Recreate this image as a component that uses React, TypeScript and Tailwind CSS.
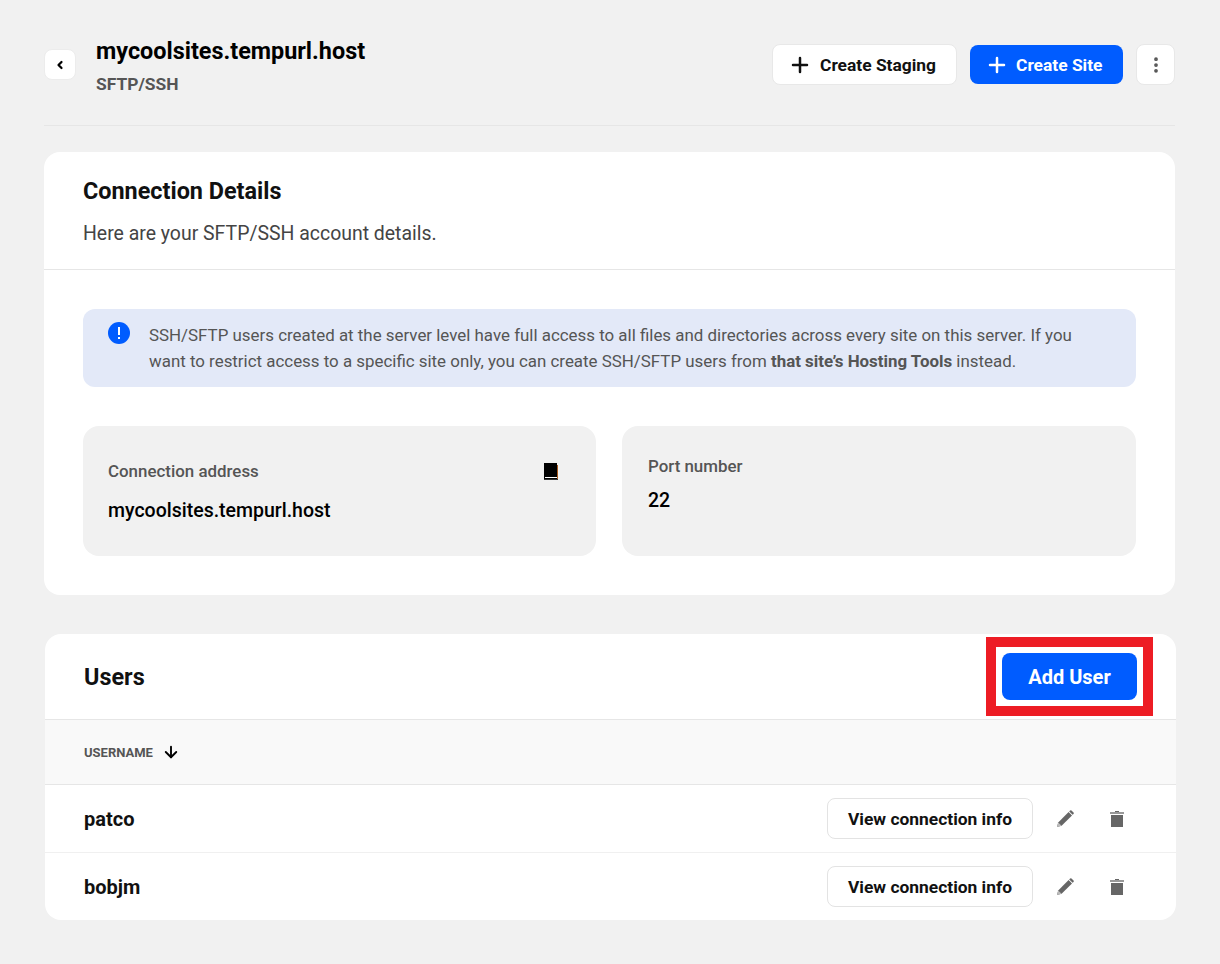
import { ArrowDown, ChevronLeft, EllipsisVertical, Plus } from "lucide-react";

const users = ["patco", "bobjm"];

function BookGlyph() {
  return (
    <svg width="15" height="17" viewBox="0 0 15 17">
      <rect x="0" y="0" width="13" height="16" fill="#000" />
      <rect x="13" y="2" width="1" height="15" fill="#a85a1e" />
      <rect x="1" y="14" width="12" height="1" fill="#fff" />
      <rect x="0" y="16" width="14" height="1" fill="#333" />
    </svg>
  );
}

function PencilIcon() {
  return (
    <svg width="18" height="18" viewBox="0 0 18 18" fill="#666">
      <path d="M1 17l1.2-4.6L12.6 2l3.4 3.4L5.6 15.8z" />
      <path d="M2.2 12.4L5.6 15.8 1 17z" fill="#bbb" />
      <path d="M13.2 1.4l.9-.9a1 1 0 0 1 1.4 0l2 2a1 1 0 0 1 0 1.4l-.9.9z" />
    </svg>
  );
}

function TrashIcon() {
  return (
    <svg width="14" height="16" viewBox="0 0 14 16">
      <rect x="5" y="0" width="4" height="2" fill="#666" />
      <rect x="0" y="1" width="14" height="2" fill="#999" />
      <rect x="1" y="4" width="12" height="12" fill="#666" />
    </svg>
  );
}

export default function App() {
  return (
    <div className="min-h-[964px] bg-[#f1f1f1] pl-[44px] pr-[45px] pt-[38px] font-['Roboto',sans-serif] text-[#111]">
      <header className="flex h-[88px] items-start justify-between border-b border-[#e6e6e6]">
        <div className="flex items-start">
          <button className="mt-[11px] flex h-[31px] w-[32px] items-center justify-center rounded-lg border border-[#ececec] bg-white text-black">
            <ChevronLeft size={12} strokeWidth={4.5} />
          </button>
          <div className="-mt-px ml-[20px]">
            <h1 className="text-[23.4px] font-bold leading-[28px] text-black">mycoolsites.tempurl.host</h1>
            <p className="mt-[7px] text-[17.4px] font-bold leading-[24px] text-[#555]">SFTP/SSH</p>
          </div>
        </div>
        <div className="mt-[6px] flex items-center gap-[13px]">
          <button className="flex h-[41px] w-[185px] items-center gap-[8px] rounded-lg border border-[#e8e8e8] bg-white pl-[15px] pt-px text-[17.4px] font-bold text-[#111]">
            <Plus size={24} strokeWidth={2.5} />
            Create Staging
          </button>
          <button className="flex h-[39px] w-[153px] items-center gap-[7px] rounded-lg bg-[#005cff] pl-[15px] pt-px text-[17.4px] font-bold text-white">
            <Plus size={24} strokeWidth={2.5} />
            Create Site
          </button>
          <button className="flex h-[41px] w-[39px] items-center justify-center rounded-lg border border-[#e8e8e8] bg-white text-[#555]">
            <EllipsisVertical size={20} strokeWidth={2.5} />
          </button>
        </div>
      </header>

      <section className="mt-[26px] rounded-2xl bg-white pb-[39px]">
        <div className="h-[118px] border-b border-[#e6e6e6] px-[39px] pt-[24px]">
          <h2 className="text-[23.4px] font-bold leading-[30px]">Connection Details</h2>
          <p className="mt-[15px] text-[19.46px] leading-[26px] text-[#444]">Here are your SFTP/SSH account details.</p>
        </div>
        <div className="px-[39px] pt-[39px]">
          <div className="flex h-[78px] rounded-xl bg-[#e3e9f8] pl-[25px] pt-[13px] pr-[40px]">
            <svg className="shrink-0" width="22" height="22" viewBox="0 0 22 22">
              <circle cx="11" cy="11" r="11" fill="#005cff" />
              <rect x="10" y="5" width="2" height="8" fill="#fff" />
              <rect x="10" y="15" width="2" height="2" fill="#fff" />
            </svg>
            <p className="ml-[19px] text-[16.9px] leading-[26px] text-[#555]">
              SSH/SFTP users created at the server level have full access to all files and directories across every site on this server. If you want to restrict access to a specific site only, you can create SSH/SFTP users from{" "}
              <strong className="font-bold">that site’s Hosting Tools</strong> instead.
            </p>
          </div>
          <div className="mt-[39px] grid grid-cols-[513px_514px] gap-[26px]">
            <div className="flex h-[130px] items-start justify-between rounded-2xl bg-[#f1f1f1] pl-[25px] pr-[37px] pt-[32px]">
              <div>
                <p className="text-[16.9px] font-medium leading-[26px] text-[#555]">Connection address</p>
                <p className="mt-[14px] text-[19.5px] font-medium leading-[26px] text-black">mycoolsites.tempurl.host</p>
              </div>
              <div className="mt-[5px]">
                <BookGlyph />
              </div>
            </div>
            <div className="h-[130px] rounded-2xl bg-[#f1f1f1] pl-[26px] pt-[27px]">
              <p className="text-[16.9px] font-medium leading-[26px] text-[#555]">Port number</p>
              <p className="mt-[9px] text-[19.5px] font-medium leading-[26px] text-black">22</p>
            </div>
          </div>
        </div>
      </section>

      <section className="-mr-px ml-px mt-[39px] overflow-hidden rounded-2xl bg-white">
        <div className="flex h-[86px] items-center justify-between border-b border-[#e6e6e6] pl-[39px] pr-[39px]">
          <h2 className="pt-[2px] text-[23.4px] font-bold">Users</h2>
          <div className="relative">
            <button className="h-[47px] w-[135px] rounded-lg bg-[#005cff] text-[20px] font-bold text-white">Add User</button>
            <div className="absolute -bottom-[16px] -left-[16px] -right-[16px] -top-[16px] border-[10px] border-[#ed1c24]" />
          </div>
        </div>
        <div className="flex h-[65px] items-center gap-[9px] border-b border-[#e6e6e6] bg-[#f9f9f9] pl-[39px]">
          <span className="pt-px text-[13px] font-bold text-[#555]">USERNAME</span>
          <ArrowDown size={18} strokeWidth={2.5} className="text-black" />
        </div>
        {users.map((name, i) => (
          <div
            key={name}
            className={i === 0
              ? "flex h-[68px] items-center justify-between border-b border-[#f0f0f0] pl-[39px] pr-[52px]"
              : "flex h-[67px] items-center justify-between pl-[39px] pr-[52px]"}
          >
            <span className="text-xl font-bold">{name}</span>
            <div className="flex items-center">
              <button className="h-[41px] w-[206px] rounded-lg border border-[#e3e3e3] bg-white pt-[2px] text-[17.4px] font-bold text-[#111]">View connection info</button>
              <span className="ml-[23px] flex w-[18px] justify-center"><PencilIcon /></span>
              <span className="ml-[36px] flex w-[14px] justify-center"><TrashIcon /></span>
            </div>
          </div>
        ))}
      </section>
    </div>
  );
}
